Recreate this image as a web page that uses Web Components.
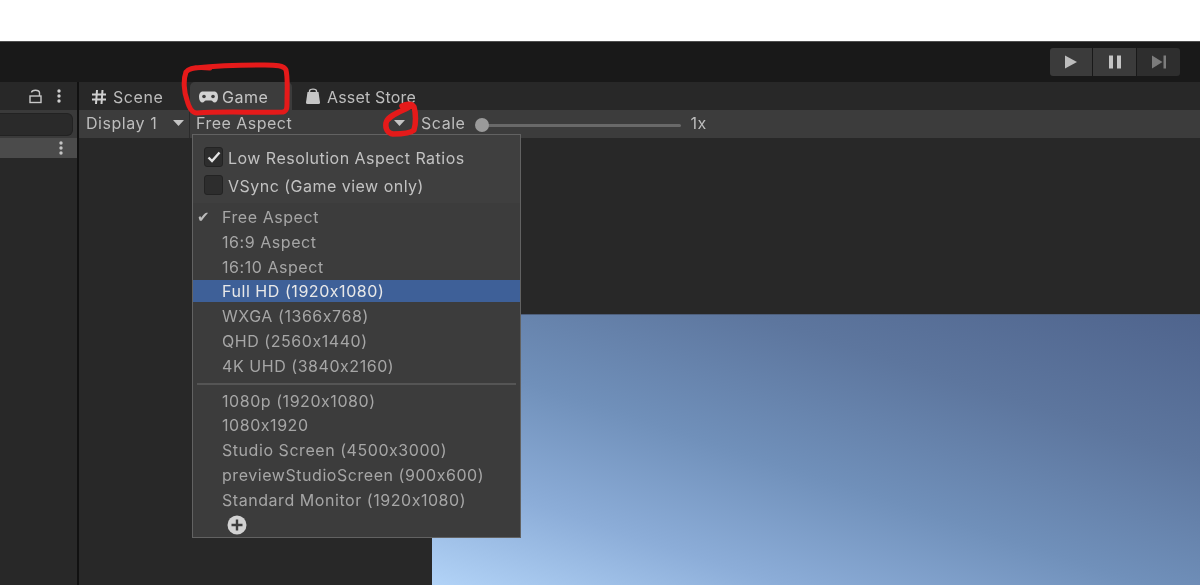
<!DOCTYPE html>
<html>
<head>
<meta charset="utf-8">
<title>Game view</title>
<style>
html, body { margin: 0; height: 100%; background: #fff; overflow: hidden; }
body { font-family: Inter, "Liberation Sans", sans-serif; font-size: 16px; }
</style>
</head>
<body>
<unity-editor>
    <play-bar slot="top"></play-bar>
    <hierarchy-panel slot="left"></hierarchy-panel>
    <game-panel slot="main">
        <aspect-menu slot="menu">
            <menu-check checked>Low Resolution Aspect Ratios</menu-check>
            <menu-check>VSync (Game view only)</menu-check>
            <menu-item slot="items" ticked>Free Aspect</menu-item>
            <menu-item slot="items">16:9 Aspect</menu-item>
            <menu-item slot="items">16:10 Aspect</menu-item>
            <menu-item slot="items" selected>Full HD (1920x1080)</menu-item>
            <menu-item slot="items">WXGA (1366x768)</menu-item>
            <menu-item slot="items">QHD (2560x1440)</menu-item>
            <menu-item slot="items">4K UHD (3840x2160)</menu-item>
            <menu-item slot="custom">1080p (1920x1080)</menu-item>
            <menu-item slot="custom">1080x1920</menu-item>
            <menu-item slot="custom">Studio Screen (4500x3000)</menu-item>
            <menu-item slot="custom">previewStudioScreen (900x600)</menu-item>
            <menu-item slot="custom">Standard Monitor (1920x1080)</menu-item>
        </aspect-menu>
    </game-panel>
    <red-marks slot="marks"></red-marks>
</unity-editor>

<script>
class UnityEditor extends HTMLElement {
    constructor(){
        super();
        this.attachShadow({mode: 'open'});
        this.shadowRoot.innerHTML = `
        <style>
        :host { display: flex; flex-direction: column; position: relative; height: 585px; overflow: hidden; filter: blur(.35px); }
        .paper { height: 41px; flex: none; background: #fff; }
        .body { flex: 1; display: flex; min-height: 0; }
        </style>
        <div class="paper"></div>
        <slot name="top"></slot>
        <div class="body">
            <slot name="left"></slot>
            <slot name="main"></slot>
        </div>
        <slot name="marks"></slot>
        `;
    }
}

class PlayBar extends HTMLElement {
    constructor(){
        super();
        this.attachShadow({mode: 'open'});
        this.shadowRoot.innerHTML = `
        <style>
        :host { display: flex; flex: none; height: 41px; box-sizing: border-box; background: #191919; border-top: 1px solid #4e4e4e; justify-content: flex-end; padding: 6px 20px 0 0; }
        .group { display: flex; height: 28px; gap: 1px; }
        .btn { width: 43px; background: #3b3b3b; display: flex; align-items: center; justify-content: center; }
        .btn:first-child { width: 42px; border-radius: 3px 0 0 3px; }
        .btn:last-child { background: #2e2e2e; border-radius: 0 3px 3px 0; }
        svg { display: block; }
        </style>
        <div class="group">
            <div class="btn"><svg width="12" height="14" viewBox="0 0 12 14"><path d="M0 0.5 L12 7 L0 13.5 Z" fill="#bdbdbd"/></svg></div>
            <div class="btn"><svg width="12" height="14" viewBox="0 0 12 14"><rect x="0" y="0.5" width="4" height="13" fill="#c4c4c4"/><rect x="8" y="0.5" width="4" height="13" fill="#c4c4c4"/></svg></div>
            <div class="btn"><svg width="14" height="14" viewBox="0 0 14 14"><path d="M0 0.5 L10.5 7 L0 13.5 Z" fill="#7c7c7c"/><rect x="11.5" y="0.5" width="2.5" height="13" fill="#7c7c7c"/></svg></div>
        </div>
        `;
    }
}

class HierarchyPanel extends HTMLElement {
    constructor(){
        super();
        this.attachShadow({mode: 'open'});
        this.shadowRoot.innerHTML = `
        <style>
        :host { display: flex; flex-direction: column; flex: none; width: 77px; background: #282828; border-right: 2px solid #111; }
        .head { height: 28px; background: #282828; display: flex; align-items: center; justify-content: flex-end; gap: 14px; padding-right: 16px; box-sizing: border-box; }
        .search { height: 28px; background: #3a3a3a; box-sizing: border-box; padding: 3px 4px 3px 0; }
        .field { height: 21px; background: #2a2a2a; border: 1px solid #222; border-left: 0; border-radius: 0 6px 6px 0; }
        .row { height: 20px; background: #4b4b4b; display: flex; align-items: center; justify-content: flex-end; padding-right: 14.5px; }
        svg { display: block; }
        </style>
        <div class="head">
            <svg width="14" height="15" viewBox="0 0 14 15" fill="none" stroke="#c8c8c8" stroke-width="1.4"><rect x="1" y="7" width="11" height="6.5"/><path d="M2.5 3.5 C3 0.5 10 0.5 10.5 3.5 V7"/></svg>
            <svg width="4" height="14" viewBox="0 0 4 14" fill="#cfcfcf"><circle cx="2" cy="2" r="1.7"/><circle cx="2" cy="7" r="1.7"/><circle cx="2" cy="12" r="1.7"/></svg>
        </div>
        <div class="search"><div class="field"></div></div>
        <div class="row">
            <svg width="4" height="14" viewBox="0 0 4 14" fill="#c4c4c4"><circle cx="2" cy="2" r="1.7"/><circle cx="2" cy="7" r="1.7"/><circle cx="2" cy="12" r="1.7"/></svg>
        </div>
        `;
    }
}

class GamePanel extends HTMLElement {
    constructor(){
        super();
        this.attachShadow({mode: 'open'});
        this.shadowRoot.innerHTML = `
        <style>
        :host { display: flex; flex-direction: column; flex: 1; min-width: 0; position: relative; background: #282828; color: #bdbdbd; letter-spacing: .55px; }
        .tabs { height: 28px; flex: none; display: flex; padding-left: 13px; background: #282828; }
        .tab { display: flex; align-items: center; height: 28px; box-sizing: border-box; padding-top: 2px; }
        .scene { width: 98px; gap: 7px; }
        .game { width: 102px; padding-left: 9px; gap: 4px; background: #3c3c3c; border-radius: 5px 5px 0 0; color: #c6c6c6; }
        .store { margin-left: 14px; gap: 7px; letter-spacing: .18px; }
        .store svg { margin-top: -2px; }
        .tools { height: 28px; flex: none; background: #3c3c3c; display: flex; align-items: center; }
        .tools span { margin-bottom: 3px; }
        .tools .pick svg { margin-bottom: 2px; }
        .pick { display: flex; align-items: center; height: 28px; box-sizing: border-box; }
        .display { width: 111px; padding-left: 7px; border-right: 1px solid #2b2b2b; justify-content: space-between; padding-right: 5px; }
        .aspect { width: 224px; padding-left: 5px; padding-right: 8px; justify-content: space-between; border-right: 1px solid #2b2b2b; }
        .aspect span { letter-spacing: .48px; margin-left: 1px; }
        .scale { margin-left: 7px; }
        .slider { width: 200px; height: 14px; margin: 2px 10px 0 15px; position: relative; flex: none; display: flex; align-items: center; }
        .track { width: 199px; margin-left: 1px; height: 3px; background: #696969; border-radius: 2px; }
        .thumb { width: 14px; height: 14px; border-radius: 50%; background: #9a9a9a; position: absolute; left: -6px; top: 0; }
        .view { flex: 1; min-height: 0; padding: 176px 0 0 353px; background: #282828; display: flex; }
        .sky { flex: 1; background: linear-gradient(198deg, #4f648d 0%, #5d769e 28%, #7090ba 55%, #8cadd8 78%, #b2d3f7 100%); border-top: 1px solid #4e5f7c; }
        svg { display: block; flex: none; }
        ::slotted([slot=menu]) { position: absolute; left: 113px; top: 52px; }
        </style>
        <div class="tabs">
            <div class="tab scene">
                <svg width="14" height="14" viewBox="0 0 14 14" fill="none" stroke="#d0d0d0" stroke-width="2"><path d="M5 0 L4 14 M10.5 0 L9.5 14 M0 4.5 H14 M0 9.5 H14"/></svg>
                <span>Scene</span>
            </div>
            <div class="tab game">
                <svg width="19" height="12" viewBox="0 0 19 12"><path d="M4 0.5 H15 C18 0.5 19 3 19 6 C19 9.5 17.5 11.5 15.5 11.5 C14 11.5 13.5 9.5 12 9.5 H7 C5.5 9.5 5 11.5 3.5 11.5 C1.5 11.5 0 9.5 0 6 C0 3 1 0.5 4 0.5 Z" fill="#d2d2d2"/><circle cx="5" cy="5.5" r="1.8" fill="#3c3c3c"/><circle cx="14" cy="5.5" r="1.8" fill="#3c3c3c"/></svg>
                <span>Game</span>
            </div>
            <div class="tab store">
                <svg width="14" height="16" viewBox="0 0 14 16"><path d="M1.5 4 H12.5 L14 14.5 Q14 16 12.5 16 H1.5 Q0 16 0 14.5 Z" fill="#c6c6c6"/><path d="M3.5 6 V3 C3.5 0.5 10.5 0.5 10.5 3 V6" fill="none" stroke="#c6c6c6" stroke-width="1.4"/></svg>
                <span>Asset Store</span>
            </div>
        </div>
        <div class="tools">
            <div class="pick display"><span>Display 1</span><svg width="11" height="6" viewBox="0 0 11 6"><path d="M0 0 H11 L5.5 6 Z" fill="#c4c4c4"/></svg></div>
            <div class="pick aspect"><span>Free Aspect</span><svg width="11" height="6" viewBox="0 0 11 6"><path d="M0 0 H11 L5.5 6 Z" fill="#c4c4c4"/></svg></div>
            <span class="scale">Scale</span>
            <div class="slider"><div class="track"></div><div class="thumb"></div></div>
            <span>1x</span>
        </div>
        <div class="view"><div class="sky"></div></div>
        <slot name="menu"></slot>
        `;
    }
}

class AspectMenu extends HTMLElement {
    constructor(){
        super();
        this.attachShadow({mode: 'open'});
        this.shadowRoot.innerHTML = `
        <style>
        :host { display: block; width: 329px; height: 404px; box-sizing: border-box; background: #3c3c3c; border: 1px solid #626262; }
        .checks { height: 68px; box-sizing: border-box; padding: 12px 0 0 11px; display: flex; flex-direction: column; gap: 8px; background: #3f3f3f; }
        .items { padding-top: 1.6px; }
        hr { height: 2px; border: 0; margin: 4.4px 4px 3.6px; background: #555; }
        .add { padding: 0 0 0 34px; margin-top: 2.4px; }
        svg { display: block; }
        </style>
        <div class="checks"><slot></slot></div>
        <div class="items"><slot name="items"></slot></div>
        <hr>
        <slot name="custom"></slot>
        <div class="add">
            <svg width="20" height="20" viewBox="0 0 20 20"><circle cx="10" cy="10" r="9.5" fill="#d2d2d2"/><path d="M10 4.5 V15.5 M4.5 10 H15.5" stroke="#3c3c3c" stroke-width="2.4"/></svg>
        </div>
        `;
    }
}

class MenuCheck extends HTMLElement {
    constructor(){
        super();
        this.attachShadow({mode: 'open'});
        const mark = this.hasAttribute('checked')
            ? '<svg width="14" height="12" viewBox="0 0 14 12"><path d="M1.5 6.5 L5 10 L12.5 1.5" fill="none" stroke="#e4e4e4" stroke-width="2.4"/></svg>'
            : '';
        this.shadowRoot.innerHTML = `
        <style>
        :host { display: flex; align-items: center; gap: 5px; height: 20px; color: #c2c2c2; letter-spacing: .48px; }
        .box { width: 19px; height: 20px; box-sizing: border-box; background: #2d2d2d; border: 1px solid #232323; border-radius: 3px; display: flex; align-items: center; justify-content: center; }
        span { margin-top: 2px; }
        </style>
        <div class="box">${mark}</div>
        <span><slot></slot></span>
        `;
    }
}

class MenuItem extends HTMLElement {
    constructor(){
        super();
        this.attachShadow({mode: 'open'});
        const tick = this.hasAttribute('ticked') ? '✔' : '';
        this.shadowRoot.innerHTML = `
        <style>
        :host { display: flex; align-items: center; height: 24.8px; color: #a6a6a6; letter-spacing: .55px; }
        :host([selected]) { color: #e8e8e8; background: linear-gradient(#3e6098, #3e6098) center / 100% 22px no-repeat; }
        .tick { width: 29px; box-sizing: border-box; padding-left: 4px; font-size: 15px; line-height: 18px; color: #bcbcbc; letter-spacing: 0; font-family: "DejaVu Sans", sans-serif; }
        </style>
        <span class="tick">${tick}</span>
        <span><slot></slot></span>
        `;
    }
}

class RedMarks extends HTMLElement {
    constructor(){
        super();
        this.attachShadow({mode: 'open'});
        this.shadowRoot.innerHTML = `
        <style>
        :host { position: absolute; left: 0; top: 0; width: 1200px; height: 585px; pointer-events: none; }
        svg { display: block; }
        </style>
        <svg width="1200" height="585" viewBox="0 0 1200 585" fill="none" stroke="#e51a1a" stroke-linecap="round" stroke-linejoin="round">
            <path stroke-width="5" d="M210 68 C200 67 190 67 186 72 C183 80 184 92 187 100 C189 108 192 113 197 113 C225 111 255 113 283 112 C287 111 287 108 287 102 C287 90 288 78 286 70 C284 65 275 65 265 65 C245 65 225 65 195 68"/>
            <path stroke-width="5.5" d="M402 106 C406 104 412 103 414 107 C416 113 416 124 414 130 C410 134 400 134 393 134 C388 133 385 129 386 123 C387 118 393 115 399 112 C404 110 408 108 411 106"/>
        </svg>
        `;
    }
}

customElements.define('unity-editor', UnityEditor);
customElements.define('play-bar', PlayBar);
customElements.define('hierarchy-panel', HierarchyPanel);
customElements.define('game-panel', GamePanel);
customElements.define('aspect-menu', AspectMenu);
customElements.define('menu-check', MenuCheck);
customElements.define('menu-item', MenuItem);
customElements.define('red-marks', RedMarks);
</script>
</body>
</html>
